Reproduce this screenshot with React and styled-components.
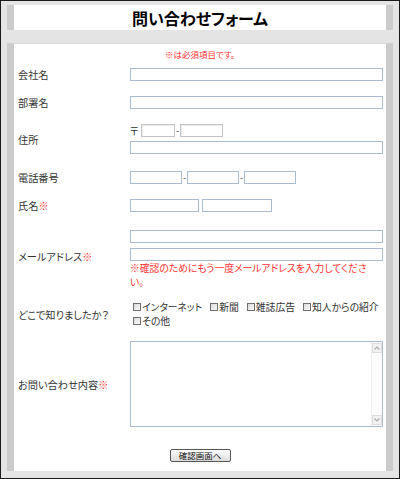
import React from "react";
import styled, { createGlobalStyle } from "styled-components";

const Global = createGlobalStyle`
  html, body { margin: 0; padding: 0; background: #fff; }
  body { font-family: "Noto Sans CJK JP", "Noto Sans", sans-serif; }
  *, *::before, *::after { box-sizing: border-box; }
`;

const Frame = styled.div`
  width: 400px;
  height: 479px;
  border: 1px solid #1a1a1a;
  background: #e4e4e4;
  padding: 4px 6px 7px;
  display: flex;
  flex-direction: column;
  font-feature-settings: "palt";
`;

const Header = styled.header`
  height: 25px;
  border-left: 7px solid #cbcbcb;
  border-right: 7px solid #cbcbcb;
  background: #fff;
  display: flex;
  align-items: center;
  justify-content: center;
`;

const Title = styled.h1`
  margin: 0;
  font-size: 16px;
  font-weight: bold;
  line-height: 1;
  color: #000;
`;

const FormBox = styled.form`
  margin-top: 13px;
  height: 428px;
  border-left: 7px solid #cbcbcb;
  border-right: 7px solid #cbcbcb;
  border-top: 1px solid #d9d9d9;
  background: #fff;
  display: flex;
  flex-direction: column;
`;

const Notice = styled.p`
  margin: 0;
  padding-top: 4px;
  height: 16px;
  text-align: center;
  font-size: 8.5px;
  line-height: 12px;
  color: #ff3333;
`;

const Row = styled.div`
  display: grid;
  grid-template-columns: 116px 1fr;
`;

const Label = styled.div`
  display: flex;
  align-items: center;
  padding-left: 4px;
  font-size: 10.2px;
  color: #333;
  white-space: nowrap;
`;

const Req = styled.span`
  color: #ff3333;
`;

const Field = styled.div`
  padding: ${(p) => p.$pt}px 3px ${(p) => p.$pb}px 0;
  display: flex;
  flex-direction: column;
  gap: ${(p) => p.$gap || 0}px;
`;

const Line = styled.div`
  display: flex;
  align-items: center;
  height: 13px;
  font-size: 10px;
  line-height: 13px;
  color: #333;
`;

const Input = styled.input`
  display: block;
  margin: 0;
  height: 13px;
  width: ${(p) => (p.$w ? `${p.$w}px` : "100%")};
  flex: none;
  padding: 0 2px;
  border: 1px solid ${(p) => (p.$gray ? "#c4c4c4" : "#abbccf")};
  box-shadow: ${(p) => (p.$gray ? "inset 1px 1px 0 #ececec" : "none")};
  background: #fff;
  font-size: 10px;
  outline: none;
`;

const Postal = styled.span`
  width: 11px;
  font-size: 10px;
  color: #333;
`;

const Dash = styled.span`
  width: 5px;
  text-align: center;
  font-size: 9px;
  color: #333;
`;

const Space = styled.span`
  width: 3px;
`;

const Note = styled.div`
  font-size: 9.8px;
  line-height: 14px;
  color: #ff3333;
  white-space: nowrap;
`;

const CheckLine = styled.div`
  display: flex;
  align-items: center;
  height: 14px;
  font-size: 9.8px;
  color: #333;
  white-space: nowrap;
`;

const CheckItem = styled.label`
  display: inline-flex;
  align-items: center;
  margin-right: 5px;
`;

const Box = styled.input`
  appearance: none;
  -webkit-appearance: none;
  width: 8px;
  height: 8px;
  margin: 0 1px 0 3px;
  border: 1px solid #707070;
  background: linear-gradient(135deg, #d8d8d8, #fdfdfd);
`;

const AreaWrap = styled.div`
  position: relative;
  width: 253px;
  height: 86px;
`;

const Area = styled.textarea`
  display: block;
  width: 100%;
  height: 100%;
  margin: 0;
  padding: 2px;
  border: 1px solid #abbccf;
  resize: none;
  outline: none;
  overflow: hidden;
`;

const Scroll = styled.div`
  position: absolute;
  top: 1px;
  right: 1px;
  bottom: 1px;
  width: 11px;
  padding: 1px 0;
  border-left: 1px solid #efefef;
  background: #fcfcfc;
  display: flex;
  flex-direction: column;
  justify-content: space-between;
  align-items: center;
`;

const Arrow = styled.span`
  width: 10px;
  height: 10px;
  background: #f1f1f1;
  border: 1px solid #dedede;
  display: flex;
  align-items: center;
  justify-content: center;
`;

const ButtonRow = styled.div`
  display: flex;
  justify-content: center;
  padding: 14px 0 9px;
`;

const Button = styled.button`
  width: 61px;
  height: 13px;
  padding: 0;
  margin: 0;
  border: 1px solid #555;
  border-radius: 2px;
  background: linear-gradient(#fdfdfd, #dcdcdc);
  font-family: inherit;
  font-size: 8.5px;
  line-height: 11px;
  color: #111;
  font-feature-settings: "palt";
`;

const Chevron = ({ up }) => (
  <svg width="8" height="8" viewBox="0 0 8 8">
    <path
      d={up ? "M1.5 5.5 L4 3 L6.5 5.5" : "M1.5 2.5 L4 5 L6.5 2.5"}
      fill="none"
      stroke="#aaa"
      strokeWidth="1.2"
    />
  </svg>
);

const sources = ["インターネット", "新聞", "雑誌広告", "知人からの紹介"];

export default function App() {
  return (
    <>
      <Global />
      <Frame>
        <Header>
          <Title>問い合わせフォーム</Title>
        </Header>
        <FormBox onSubmit={(e) => e.preventDefault()}>
          <Notice>※は必須項目です。</Notice>

          <Row>
            <Label>会社名</Label>
            <Field $pt={8} $pb={7}>
              <Input />
            </Field>
          </Row>

          <Row>
            <Label>部署名</Label>
            <Field $pt={8} $pb={7}>
              <Input />
            </Field>
          </Row>

          <Row>
            <Label>住所</Label>
            <Field $pt={8} $pb={9} $gap={4}>
              <Line>
                <Postal>〒</Postal>
                <Input $w={34} $gray />
                <Dash>-</Dash>
                <Input $w={43} $gray />
              </Line>
              <Input />
            </Field>
          </Row>

          <Row>
            <Label>電話番号</Label>
            <Field $pt={8} $pb={7}>
              <Line>
                <Input $w={52} />
                <Dash>-</Dash>
                <Input $w={52} />
                <Dash>-</Dash>
                <Input $w={52} />
              </Line>
            </Field>
          </Row>

          <Row>
            <Label>
              氏名<Req>※</Req>
            </Label>
            <Field $pt={8} $pb={7}>
              <Line>
                <Input $w={69} />
                <Space />
                <Input $w={70} />
              </Line>
            </Field>
          </Row>

          <Row>
            <Label>
              メールアドレス<Req>※</Req>
            </Label>
            <Field $pt={11} $pb={5}>
              <Input />
              <Input style={{ marginTop: 5 }} />
              <div>
                <Note>※確認のためにもう一度メールアドレスを入力してくださ</Note>
                <Note>い。</Note>
              </div>
            </Field>
          </Row>

          <Row>
            <Label>どこで知りましたか？</Label>
            <Field $pt={6} $pb={6}>
              <CheckLine>
                {sources.map((s) => (
                  <CheckItem key={s}>
                    <Box type="checkbox" />
                    {s}
                  </CheckItem>
                ))}
              </CheckLine>
              <CheckLine>
                <CheckItem>
                  <Box type="checkbox" />
                  その他
                </CheckItem>
              </CheckLine>
            </Field>
          </Row>

          <Row>
            <Label>
              お問い合わせ内容<Req>※</Req>
            </Label>
            <Field $pt={7} $pb={8}>
              <AreaWrap>
                <Area />
                <Scroll>
                  <Arrow>
                    <Chevron up />
                  </Arrow>
                  <Arrow>
                    <Chevron />
                  </Arrow>
                </Scroll>
              </AreaWrap>
            </Field>
          </Row>

          <ButtonRow>
            <Button type="submit">確認画面へ</Button>
          </ButtonRow>
        </FormBox>
      </Frame>
    </>
  );
}
